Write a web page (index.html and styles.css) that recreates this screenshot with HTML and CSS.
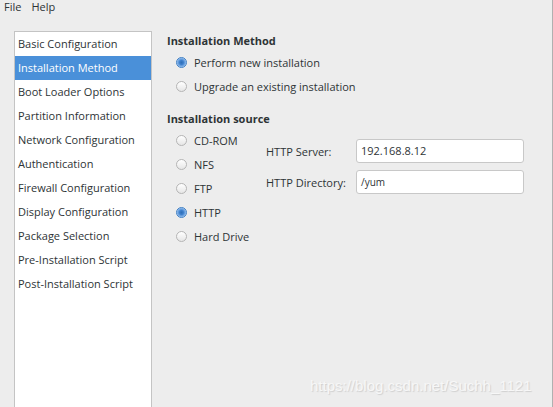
FILE: index.html
```html
<!DOCTYPE html>
<html>
<head>
<meta charset="utf-8">
<link rel="stylesheet" href="styles.css">
</head>
<body>
<div class="window">
  <div class="menubar"><span class="menu">File</span><span class="menu">Help</span></div>
  <div class="main">
    <ul class="sidebar">
      <li>Basic Configuration</li>
      <li class="selected">Installation Method</li>
      <li>Boot Loader Options</li>
      <li>Partition Information</li>
      <li>Network Configuration</li>
      <li>Authentication</li>
      <li>Firewall Configuration</li>
      <li>Display Configuration</li>
      <li>Package Selection</li>
      <li>Pre-Installation Script</li>
      <li>Post-Installation Script</li>
    </ul>
    <div class="content">
      <div class="heading">Installation Method</div>
      <div class="group">
        <div class="radio-row"><span class="radio checked"></span>Perform new installation</div>
        <div class="radio-row"><span class="radio"></span>Upgrade an existing installation</div>
      </div>
      <div class="heading second">Installation source</div>
      <div class="source">
        <div class="group sources">
          <div class="radio-row"><span class="radio"></span>CD-ROM</div>
          <div class="radio-row"><span class="radio"></span>NFS</div>
          <div class="radio-row"><span class="radio"></span>FTP</div>
          <div class="radio-row"><span class="radio checked"></span>HTTP</div>
          <div class="radio-row"><span class="radio"></span>Hard Drive</div>
        </div>
        <div class="fields">
          <div class="field"><span class="label">HTTP Server:</span><span class="entry">192.168.8.12</span></div>
          <div class="field"><span class="label">HTTP Directory:</span><span class="entry small">/yum</span></div>
        </div>
      </div>
    </div>
  </div>
  <div class="watermark">https://blog.csdn.net/Suchh_1121</div>
</div>
</body>
</html>
```
FILE: styles.css
```css
html, body {
  margin: 0;
  padding: 0;
  background: #ededed;
}
body {
  font-family: "Open Sans", "DejaVu Sans", sans-serif;
  font-size: 11px;
  color: #2e3436;
}
.window {
  width: 552px;
  height: 407px;
  border-right: 1px solid #b0b0b0;
  position: relative;
  overflow: hidden;
}
.menubar {
  height: 13px;
  display: flex;
  gap: 10px;
  padding-left: 4px;
  line-height: 13px;
}
.main {
  display: flex;
  padding-top: 18px;
  padding-left: 14px;
}
.sidebar {
  flex: none;
  list-style: none;
  margin: 0;
  padding: 0;
  width: 136px;
  height: 390px;
  background: #fff;
  border: 1px solid #c4c4c4;
  border-bottom: none;
}
.sidebar li {
  height: 24px;
  line-height: 24px;
  padding-left: 3px;
  white-space: nowrap;
}
.sidebar li.selected {
  background: #4a90d9;
  color: #fff;
}
.content {
  padding-left: 15px;
  padding-top: 1px;
}
.heading {
  font-weight: bold;
  height: 18px;
  line-height: 18px;
}
.heading.second {
  margin-top: 12px;
}
.group {
  padding-left: 9px;
}
.group.sources {
  flex: none;
  width: 90px;
}
.radio-row {
  height: 24px;
  display: flex;
  align-items: center;
  white-space: nowrap;
}
.radio {
  width: 9px;
  height: 9px;
  border-radius: 50%;
  border: 1px solid #b5b5b5;
  background: linear-gradient(#ffffff, #e6e6e6);
  margin-right: 7px;
  flex: none;
}
.radio.checked {
  border-color: #3f7fc4;
  background: radial-gradient(circle, #2f6fb7 0, #3d7fcc 2px, #7fb0e8 4px, #dbe8f7 5px);
}
.source {
  display: flex;
}
.fields {
  padding-top: 11px;
  display: flex;
  flex-direction: column;
  gap: 7px;
}
.field {
  display: flex;
  align-items: center;
}
.label {
  width: 90px;
  white-space: nowrap;
}
.entry {
  box-sizing: border-box;
  width: 168px;
  height: 24px;
  line-height: 22px;
  background: #fff;
  border: 1px solid #c8c8c8;
  border-radius: 3px;
  padding-left: 4px;
}
.entry.small {
  font-size: 10px;
}
.watermark {
  position: absolute;
  left: 310px;
  top: 377px;
  font-family: "Liberation Sans", sans-serif;
  font-size: 15px;
  color: #f7f7f7;
  text-shadow: 1px 1px 1px #cfcfcf;
  white-space: nowrap;
}
```
